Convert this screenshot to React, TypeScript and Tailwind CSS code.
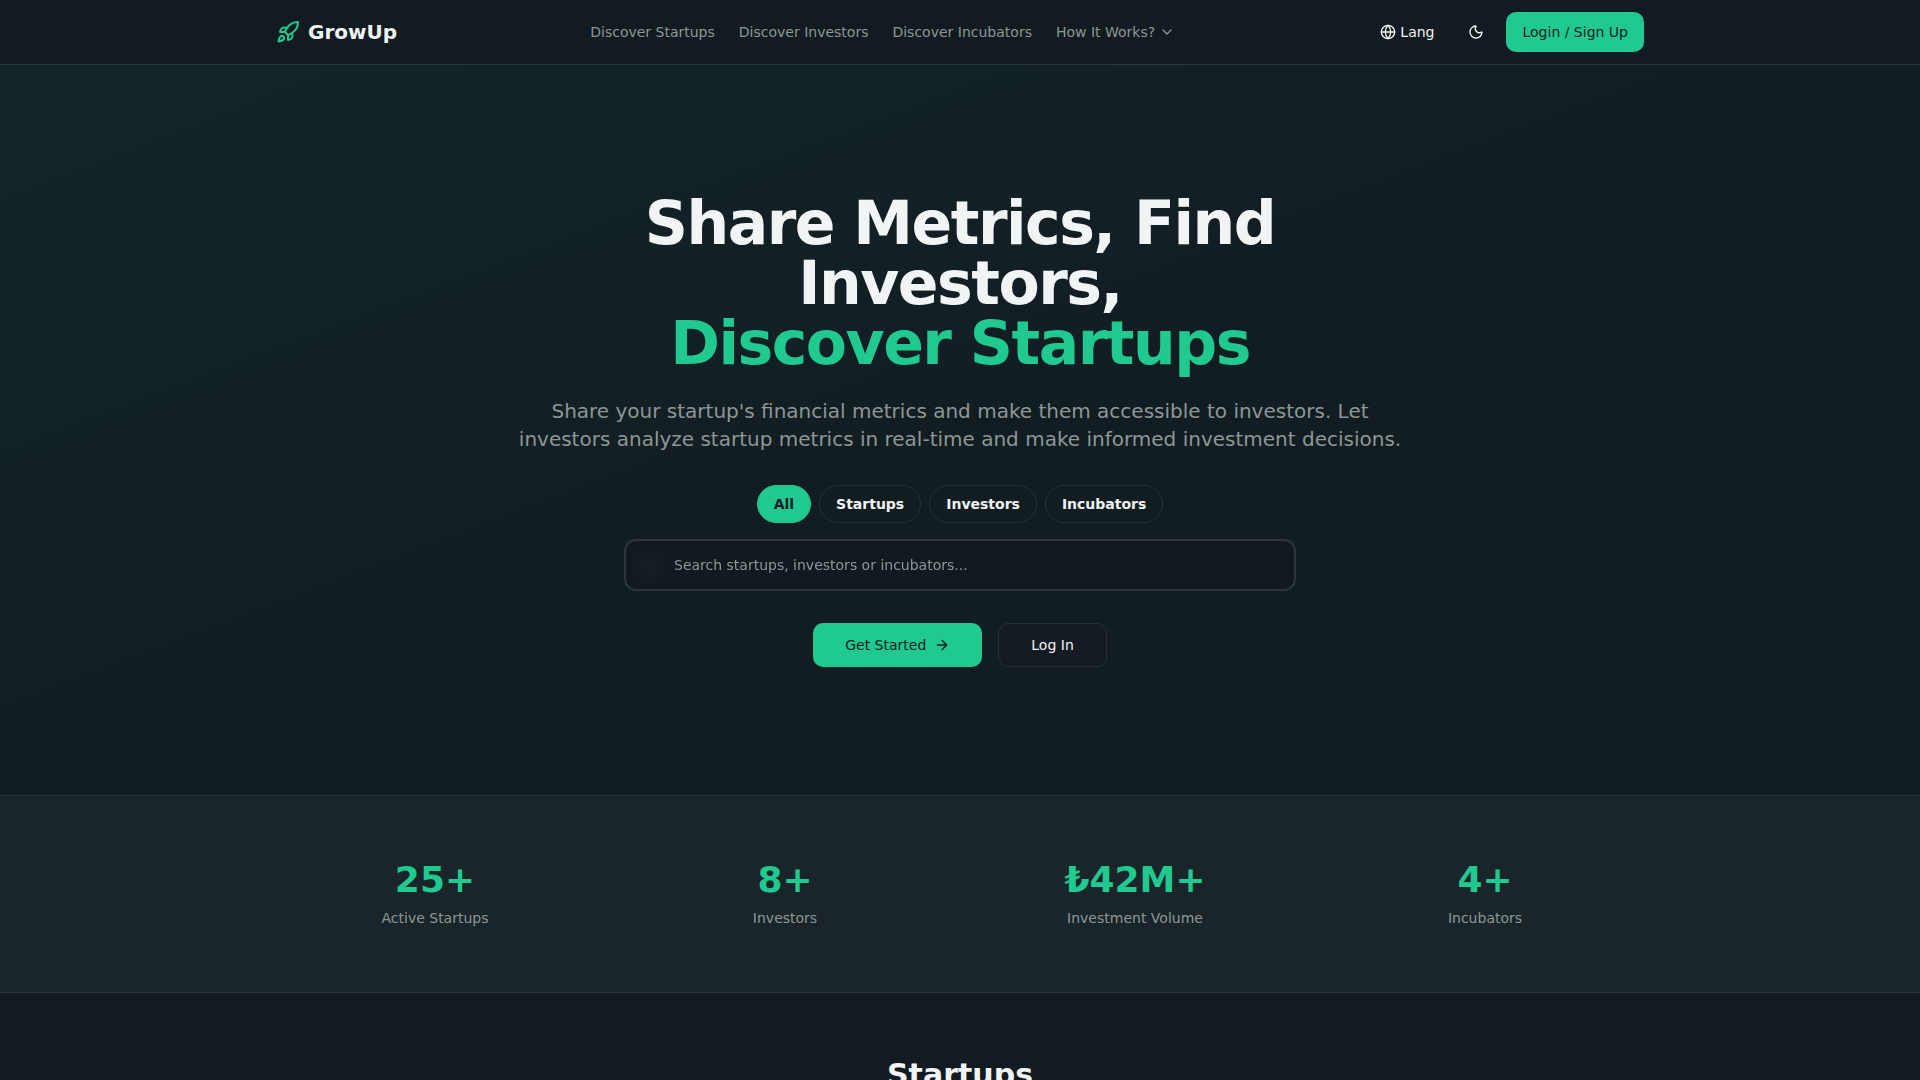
import { useState } from "react";
import { ArrowRight, ChevronDown, Globe, Moon, Rocket, Search } from "lucide-react";

const navLinks = ["Discover Startups", "Discover Investors", "Discover Incubators"];
const filters = ["All", "Startups", "Investors", "Incubators"];
const stats = [
  { value: "25+", label: "Active Startups" },
  { value: "8+", label: "Investors" },
  { value: "₺42M+", label: "Investment Volume" },
  { value: "4+", label: "Incubators" },
];

function Header() {
  return (
    <header className="border-b border-[#2a373c] bg-[#121b20]">
      <div className="mx-auto flex h-16 max-w-[1400px] items-center justify-between px-4">
        <a href="#" className="flex items-center gap-2">
          <Rocket className="size-6 text-[#1fc990]" />
          <span className="text-xl font-bold">GrowUp</span>
        </a>
        <nav className="flex items-center gap-6 text-sm text-[#8c9796]">
          {navLinks.map((label) => (
            <a key={label} href="#">
              {label}
            </a>
          ))}
          <button type="button" className="flex items-center gap-1">
            How It Works?
            <ChevronDown className="size-4" />
          </button>
        </nav>
        <div className="flex items-center gap-3 text-sm">
          <button type="button" className="flex h-9 items-center gap-1 px-3">
            <Globe className="size-4" />
            Lang
          </button>
          <button type="button" aria-label="Toggle theme" className="flex size-9 items-center justify-center">
            <Moon className="size-4" />
          </button>
          <button type="button" className="h-10 rounded-[10px] bg-[#1fc990] px-4 text-[#141b21]">
            Login / Sign Up
          </button>
        </div>
      </div>
    </header>
  );
}

function Hero() {
  const [active, setActive] = useState("All");
  return (
    <section className="bg-linear-to-br from-[#122628] via-[#121d22] to-[#121d22] px-4 py-32">
      <div className="mx-auto flex max-w-4xl flex-col items-center text-center">
        <h1 className="text-6xl leading-none font-bold tracking-tight">
          Share Metrics, Find Investors,
          <span className="block text-[#1fc990]">Discover Startups</span>
        </h1>
        <p className="mt-6 text-xl text-[#8c9796]">
          Share your startup's financial metrics and make them accessible to investors. Let investors analyze startup
          metrics in real-time and make informed investment decisions.
        </p>
        <div className="mt-8 flex flex-wrap justify-center gap-2">
          {filters.map((name) => (
            <button
              key={name}
              type="button"
              onClick={() => setActive(name)}
              className={
                name === active
                  ? "rounded-full border border-[#1fc990] bg-[#1fc990] px-4 py-2 text-sm font-semibold text-[#141b21]"
                  : "rounded-full border border-[#263137] px-4 py-2 text-sm font-semibold"
              }
            >
              {name}
            </button>
          ))}
        </div>
        <div className="relative mt-4 w-full max-w-2xl">
          <Search className="absolute top-4 left-4 size-5 text-[#8c9796]" />
          <input
            type="search"
            aria-label="Search"
            placeholder="Search startups, investors or incubators..."
            className="relative block h-13 w-full rounded-xl border-2 border-[#2a373c] bg-[#131a20]/75 pr-4 pl-12 text-sm backdrop-blur-sm outline-none placeholder:text-[#8c9796]"
          />
        </div>
        <div className="mt-8 flex gap-4 text-sm">
          <button type="button" className="flex h-11 items-center gap-2 rounded-[10px] bg-[#1fc990] px-8 text-[#141b21]">
            Get Started
            <ArrowRight className="size-4" />
          </button>
          <button type="button" className="h-11 rounded-[10px] border border-[#263137] bg-[#141b22] px-8">
            Log In
          </button>
        </div>
      </div>
    </section>
  );
}

function Stats() {
  return (
    <section className="border-y border-[#2a373c] bg-[#1a252a] py-16">
      <div className="mx-auto grid max-w-[1400px] grid-cols-4 gap-8 px-4 text-center">
        {stats.map((stat) => (
          <div key={stat.label}>
            <div className="text-4xl font-bold text-[#1fc990]">{stat.value}</div>
            <div className="mt-2 text-sm text-[#8c9796]">{stat.label}</div>
          </div>
        ))}
      </div>
    </section>
  );
}

export default function App() {
  return (
    <div className="min-h-screen bg-[#131b22] font-['DejaVu_Sans',sans-serif] text-[#f1f4f5]">
      <Header />
      <main>
        <Hero />
        <Stats />
        <section className="py-16 text-center">
          <h2 className="text-3xl font-bold">Startups</h2>
        </section>
      </main>
    </div>
  );
}
